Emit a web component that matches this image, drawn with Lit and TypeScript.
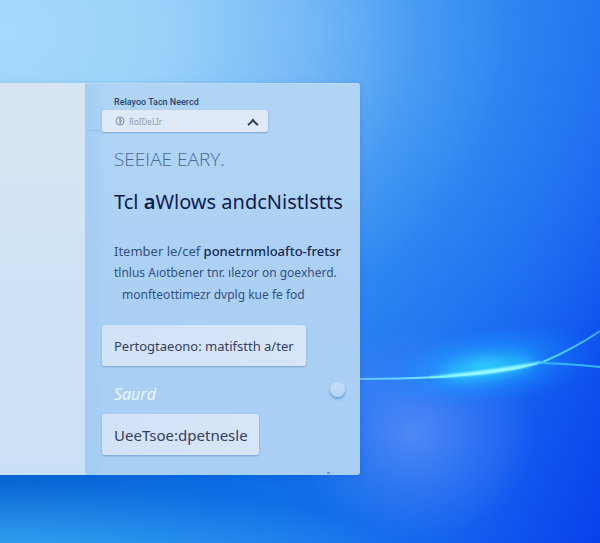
import { LitElement, html, css } from "lit";
import { customElement } from "lit/decorators.js";

@customElement("glow-backdrop")
class GlowBackdrop extends LitElement {
  static styles = css`
    :host {
      position: absolute;
      inset: 0;
      overflow: hidden;
      background:
        radial-gradient(ellipse 20% 20% at 69% 80%, rgba(96, 145, 248, 0.75), rgba(85, 135, 248, 0.4) 50%, transparent),
        radial-gradient(ellipse 70% 14% at 0% 103%, rgba(70, 185, 245, 0.75), transparent),
        radial-gradient(ellipse 85% 26% at 0% 90%, rgba(0, 96, 208, 0.9), rgba(0, 100, 225, 0.75) 45%, transparent),
        radial-gradient(ellipse 85% 65% at 0% 6%, #a4dafb, #9cd3fa 30%, rgba(130, 192, 247, 0.75) 62%, rgba(100, 175, 245, 0.3) 82%, transparent),
        radial-gradient(ellipse 60% 60% at 60% 15%, rgba(80, 164, 243, 0.5), transparent),
        linear-gradient(112deg, #4da8f2 25%, #2580f0 58%, #1561f0 82%, #0840ec 100%);
    }
    svg {
      display: block;
      width: 100%;
      height: 100%;
    }
  `;

  render() {
    return html`
      <svg viewBox="0 0 600 543" preserveAspectRatio="none" fill="none" aria-hidden="true">
        <defs>
          <radialGradient id="halo">
            <stop offset="0" stop-color="#35d0ff" stop-opacity="0.95" />
            <stop offset="0.45" stop-color="#1d9cff" stop-opacity="0.55" />
            <stop offset="1" stop-color="#1478ff" stop-opacity="0" />
          </radialGradient>
          <linearGradient id="ray" gradientUnits="userSpaceOnUse" x1="360" y1="0" x2="600" y2="0">
            <stop offset="0" stop-color="#5cc4ff" />
            <stop offset="0.35" stop-color="#7eeaff" />
            <stop offset="0.75" stop-color="#5ae0ff" />
            <stop offset="1" stop-color="#3fa8ff" />
          </linearGradient>
          <filter id="soft" x="-20%" y="-150%" width="140%" height="400%">
            <feGaussianBlur stdDeviation="6" />
          </filter>
          <filter id="fine" x="-10%" y="-50%" width="120%" height="200%">
            <feGaussianBlur stdDeviation="1" />
          </filter>
        </defs>
        <ellipse cx="484" cy="366" rx="115" ry="42" fill="url(#halo)" transform="rotate(-7 484 366)" />
        <path d="M445 375Q490 372 530 362" stroke="#24c4ff" stroke-width="9" filter="url(#soft)" />
        <path d="M360 379Q400 379 440 377Q510 372 543 362Q575 348 600 331" stroke="url(#ray)" stroke-width="2" />
        <path d="M536 363Q560 363 600 367" stroke="#35b4ff" stroke-width="2" />
        <path d="M430 377Q495 370 540 362Q500 376 430 377Z" fill="#a4ffff" stroke="#8cf8ff" filter="url(#fine)" />
      </svg>
    `;
  }
}

@customElement("app-root")
class AppRoot extends LitElement {
  static styles = css`
    * {
      box-sizing: border-box;
    }
    :host {
      display: block;
      box-sizing: border-box;
      position: relative;
      min-height: 100vh;
      padding: 83px 0 68px;
      font-family: "Noto Sans", "Open Sans", sans-serif;
      color: #22335f;
    }
    .window {
      position: relative;
      display: flex;
      width: 60%;
      min-width: 360px;
      border-radius: 0 3px 3px 0;
      box-shadow: 0 2px 7px rgba(0, 60, 170, 0.2);
    }
    .side {
      flex: 0 0 85px;
      background: linear-gradient(#d6e5f1, #d0e3f5 45%, #cae0f6);
    }
    .panel {
      flex: 1;
      display: flex;
      flex-direction: column;
      align-items: flex-start;
      padding: 12px 15px 20px 17px;
      border-top: 1px solid #b9dcf6;
      border-radius: 0 3px 3px 0;
      background: linear-gradient(to right, #a2cdf5, rgba(168, 208, 245, 0) 8%), linear-gradient(#b0d5f4, #abd0f4 55%, #a9cff4);
    }
    .caption {
      padding-left: 12px;
      font: 500 9px/12px Roboto, sans-serif;
      color: #2c4470;
    }
    .picker {
      position: relative;
      display: flex;
      width: 166px;
      height: 22px;
      margin-top: 2px;
    }
    .picker::before {
      content: "";
      position: absolute;
      right: 100%;
      bottom: 1px;
      width: 16px;
      height: 1px;
      background: #92c2f0;
    }
    .picker select {
      flex: 1;
      appearance: none;
      padding: 0 27px;
      border: 0;
      border-radius: 2px;
      background: #dfe9f8;
      box-shadow: 0 1px 2px rgba(70, 120, 190, 0.5);
      font: 8px "Noto Sans", sans-serif;
      color: #8d9bb5;
    }
    .picker svg {
      position: absolute;
      pointer-events: none;
    }
    .mark {
      left: 13px;
      top: 6px;
    }
    .chevron {
      right: 9px;
      top: 7px;
    }
    .eyebrow {
      margin: 16px 0 0;
      padding-left: 12px;
      font: 300 19px/22px "Open Sans", sans-serif;
      color: #496894;
    }
    h1 {
      margin: 16px 0 0;
      padding-left: 12px;
      font-size: 20px;
      line-height: 32px;
      font-weight: 400;
      color: #101b4d;
      white-space: nowrap;
    }
    h1 b {
      font-weight: 600;
    }
    .copy {
      margin: 22px 0 0;
      padding-left: 12px;
      font-size: 12px;
      line-height: 22px;
      color: #34507f;
      white-space: nowrap;
    }
    .copy span {
      display: block;
    }
    .copy b {
      font-weight: 500;
      color: #172654;
    }
    .copy .lead {
      font-size: 13px;
    }
    .copy .inset {
      padding-left: 8px;
    }
    .action {
      height: 41px;
      padding: 0 12px;
      border: 0;
      border-radius: 3px;
      background: linear-gradient(100deg, #d2e2f7, #d8e5f8);
      box-shadow: 0 1px 2px rgba(70, 120, 190, 0.5);
      font-family: inherit;
      text-align: left;
      color: #34405f;
      white-space: nowrap;
    }
    .first {
      width: 204px;
      margin-top: 19px;
      font-size: 13px;
    }
    .second {
      width: 157px;
      margin-top: 9px;
      font-size: 15px;
    }
    .row {
      display: flex;
      align-self: stretch;
      align-items: center;
      justify-content: space-between;
      height: 22px;
      margin-top: 17px;
      padding-left: 12px;
    }
    .row label {
      font: italic 400 16px/22px "Open Sans", sans-serif;
      color: #eefaff;
    }
    .row input {
      appearance: none;
      width: 15px;
      height: 15px;
      margin: 0 0 10px;
      border-radius: 50%;
      background: linear-gradient(#c6def8, #b3d3f8);
      box-shadow: 0 2px 3px rgba(80, 130, 215, 0.7);
    }
    .speck {
      position: absolute;
      right: 30px;
      bottom: 1px;
      width: 3px;
      height: 2px;
      border-radius: 1px;
      background: #5a8fd0;
    }
  `;

  render() {
    return html`
      <glow-backdrop></glow-backdrop>
      <main class="window">
        <aside class="side"></aside>
        <section class="panel">
          <label class="caption" for="source">Relayoo Tacn Neercd</label>
          <div class="picker">
            <select id="source">
              <option>RoIDeLIr</option>
            </select>
            <svg class="mark" width="10" height="10" viewBox="0 0 10 10" fill="none" stroke="#7889a8">
              <circle cx="5" cy="5" r="4" />
              <path d="M5 2V8M5 3Q8 5 5 7" />
            </svg>
            <svg class="chevron" width="12" height="10" viewBox="0 0 12 10" fill="none" stroke="#2d3953" stroke-width="2">
              <path d="M1 8Q4 6 6 3Q8 6 11 8" />
            </svg>
          </div>
          <p class="eyebrow">SEEIAE EARY.</p>
          <h1>Tcl <b>a</b>Wlows andcNistlstts</h1>
          <p class="copy">
            <span class="lead">Itember le/cef <b>ponetrnmloafto-fretsr</b></span>
            <span>tlnlus Aıotbener tnr. ılezor on goexherd.</span>
            <span class="inset">monfteottimezr dvplg kue fe fod</span>
          </p>
          <button class="action first" type="button">Pertogtaeono: matifstth a/ter</button>
          <div class="row">
            <label for="saurd">Saurd</label>
            <input id="saurd" type="radio" />
          </div>
          <button class="action second" type="button">UeeTsoe:dpetnesle</button>
        </section>
        <span class="speck"></span>
      </main>
    `;
  }
}
